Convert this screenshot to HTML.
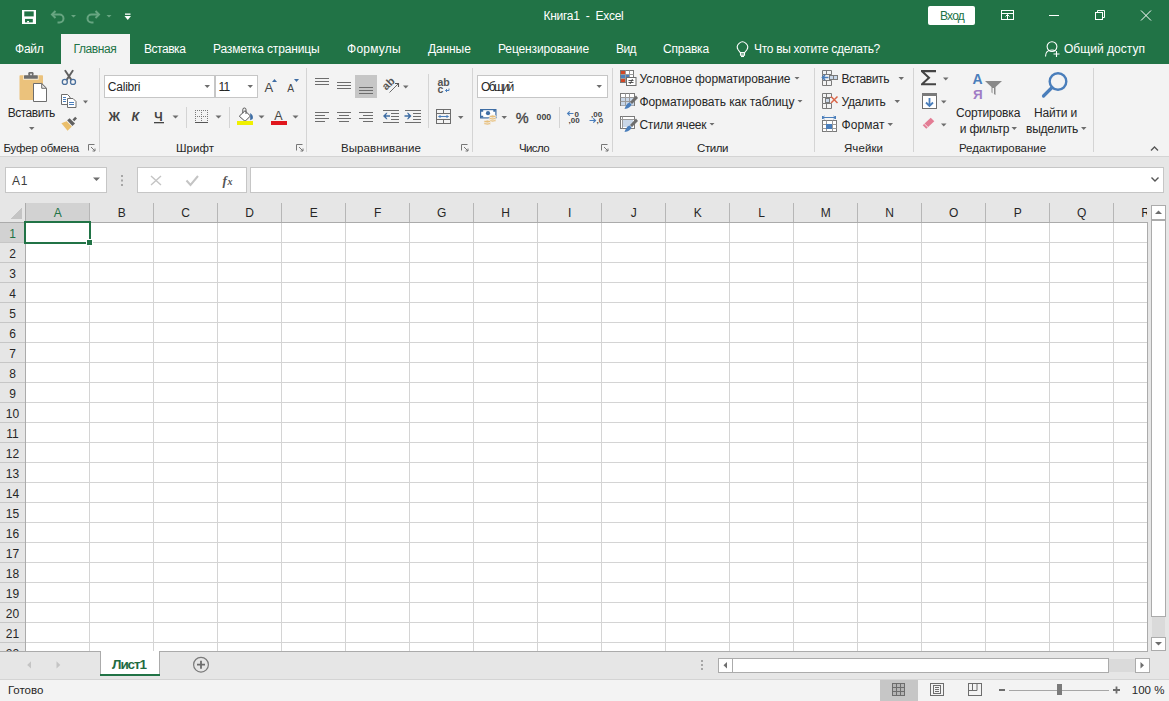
<!DOCTYPE html>
<html><head><meta charset="utf-8"><style>
html,body{margin:0;padding:0;width:1169px;height:701px;overflow:hidden;background:#fff}
#root{position:relative;width:1169px;height:701px;overflow:hidden;font-family:"Liberation Sans",sans-serif;background:#e6e6e6}
.a{position:absolute}
svg{position:absolute;overflow:visible}
</style></head><body><div id="root">
<div class="a" style="left:0px;top:0px;width:1169px;height:64px;background:#217346;"></div>
<div class="a" style="left:61px;top:34px;width:69px;height:30px;background:#f3f3f3;"></div>
<div class="a" style="left:0px;top:64px;width:1169px;height:92px;background:#f3f3f3;"></div>
<div class="a" style="left:0px;top:156px;width:1169px;height:1px;background:#d4d4d4;"></div>
<div class="a" style="left:5px;top:167px;width:102px;height:26px;background:#fff;box-sizing:border-box;border:1px solid #c6c6c6"></div>
<div class="a" style="left:137px;top:167px;width:110px;height:26px;background:#fff;box-sizing:border-box;border:1px solid #c6c6c6"></div>
<div class="a" style="left:250px;top:167px;width:914px;height:26px;background:#fff;box-sizing:border-box;border:1px solid #c6c6c6"></div>
<div class="a" style="left:25px;top:222px;width:1123px;height:429px;background:#fff;"></div>
<div class="a" style="left:25px;top:203px;width:1123px;height:19px;background:#e6e6e6;"></div>
<div class="a" style="left:25px;top:203px;width:64px;height:19px;background:#d2d2d2;"></div>
<div class="a" style="left:0px;top:222px;width:25px;height:429px;background:#e6e6e6;"></div>
<div class="a" style="left:0px;top:222px;width:25px;height:20px;background:#d2d2d2;"></div>
<svg class="a" style="left:0;top:0" width="1169" height="701" shape-rendering="crispEdges"><rect x="89" y="222" width="1" height="429" fill="#d4d4d4"/><rect x="89" y="203" width="1" height="19" fill="#b6b6b6"/><rect x="153" y="222" width="1" height="429" fill="#d4d4d4"/><rect x="153" y="203" width="1" height="19" fill="#b6b6b6"/><rect x="217" y="222" width="1" height="429" fill="#d4d4d4"/><rect x="217" y="203" width="1" height="19" fill="#b6b6b6"/><rect x="281" y="222" width="1" height="429" fill="#d4d4d4"/><rect x="281" y="203" width="1" height="19" fill="#b6b6b6"/><rect x="345" y="222" width="1" height="429" fill="#d4d4d4"/><rect x="345" y="203" width="1" height="19" fill="#b6b6b6"/><rect x="409" y="222" width="1" height="429" fill="#d4d4d4"/><rect x="409" y="203" width="1" height="19" fill="#b6b6b6"/><rect x="473" y="222" width="1" height="429" fill="#d4d4d4"/><rect x="473" y="203" width="1" height="19" fill="#b6b6b6"/><rect x="537" y="222" width="1" height="429" fill="#d4d4d4"/><rect x="537" y="203" width="1" height="19" fill="#b6b6b6"/><rect x="601" y="222" width="1" height="429" fill="#d4d4d4"/><rect x="601" y="203" width="1" height="19" fill="#b6b6b6"/><rect x="665" y="222" width="1" height="429" fill="#d4d4d4"/><rect x="665" y="203" width="1" height="19" fill="#b6b6b6"/><rect x="729" y="222" width="1" height="429" fill="#d4d4d4"/><rect x="729" y="203" width="1" height="19" fill="#b6b6b6"/><rect x="793" y="222" width="1" height="429" fill="#d4d4d4"/><rect x="793" y="203" width="1" height="19" fill="#b6b6b6"/><rect x="857" y="222" width="1" height="429" fill="#d4d4d4"/><rect x="857" y="203" width="1" height="19" fill="#b6b6b6"/><rect x="921" y="222" width="1" height="429" fill="#d4d4d4"/><rect x="921" y="203" width="1" height="19" fill="#b6b6b6"/><rect x="985" y="222" width="1" height="429" fill="#d4d4d4"/><rect x="985" y="203" width="1" height="19" fill="#b6b6b6"/><rect x="1049" y="222" width="1" height="429" fill="#d4d4d4"/><rect x="1049" y="203" width="1" height="19" fill="#b6b6b6"/><rect x="1113" y="222" width="1" height="429" fill="#d4d4d4"/><rect x="1113" y="203" width="1" height="19" fill="#b6b6b6"/><rect x="25" y="242" width="1123" height="1" fill="#d4d4d4"/><rect x="0" y="242" width="25" height="1" fill="#c6c6c6"/><rect x="25" y="262" width="1123" height="1" fill="#d4d4d4"/><rect x="0" y="262" width="25" height="1" fill="#c6c6c6"/><rect x="25" y="282" width="1123" height="1" fill="#d4d4d4"/><rect x="0" y="282" width="25" height="1" fill="#c6c6c6"/><rect x="25" y="302" width="1123" height="1" fill="#d4d4d4"/><rect x="0" y="302" width="25" height="1" fill="#c6c6c6"/><rect x="25" y="322" width="1123" height="1" fill="#d4d4d4"/><rect x="0" y="322" width="25" height="1" fill="#c6c6c6"/><rect x="25" y="342" width="1123" height="1" fill="#d4d4d4"/><rect x="0" y="342" width="25" height="1" fill="#c6c6c6"/><rect x="25" y="362" width="1123" height="1" fill="#d4d4d4"/><rect x="0" y="362" width="25" height="1" fill="#c6c6c6"/><rect x="25" y="382" width="1123" height="1" fill="#d4d4d4"/><rect x="0" y="382" width="25" height="1" fill="#c6c6c6"/><rect x="25" y="402" width="1123" height="1" fill="#d4d4d4"/><rect x="0" y="402" width="25" height="1" fill="#c6c6c6"/><rect x="25" y="422" width="1123" height="1" fill="#d4d4d4"/><rect x="0" y="422" width="25" height="1" fill="#c6c6c6"/><rect x="25" y="442" width="1123" height="1" fill="#d4d4d4"/><rect x="0" y="442" width="25" height="1" fill="#c6c6c6"/><rect x="25" y="462" width="1123" height="1" fill="#d4d4d4"/><rect x="0" y="462" width="25" height="1" fill="#c6c6c6"/><rect x="25" y="482" width="1123" height="1" fill="#d4d4d4"/><rect x="0" y="482" width="25" height="1" fill="#c6c6c6"/><rect x="25" y="502" width="1123" height="1" fill="#d4d4d4"/><rect x="0" y="502" width="25" height="1" fill="#c6c6c6"/><rect x="25" y="522" width="1123" height="1" fill="#d4d4d4"/><rect x="0" y="522" width="25" height="1" fill="#c6c6c6"/><rect x="25" y="542" width="1123" height="1" fill="#d4d4d4"/><rect x="0" y="542" width="25" height="1" fill="#c6c6c6"/><rect x="25" y="562" width="1123" height="1" fill="#d4d4d4"/><rect x="0" y="562" width="25" height="1" fill="#c6c6c6"/><rect x="25" y="582" width="1123" height="1" fill="#d4d4d4"/><rect x="0" y="582" width="25" height="1" fill="#c6c6c6"/><rect x="25" y="602" width="1123" height="1" fill="#d4d4d4"/><rect x="0" y="602" width="25" height="1" fill="#c6c6c6"/><rect x="25" y="622" width="1123" height="1" fill="#d4d4d4"/><rect x="0" y="622" width="25" height="1" fill="#c6c6c6"/><rect x="25" y="642" width="1123" height="1" fill="#d4d4d4"/><rect x="0" y="642" width="25" height="1" fill="#c6c6c6"/><rect x="0" y="222" width="1148" height="1" fill="#ababab"/><rect x="25" y="203" width="1" height="448" fill="#ababab"/><rect x="1147" y="222" width="1" height="429" fill="#ababab"/><rect x="0" y="651" width="1148" height="1" fill="#ababab"/><polygon points="22,207 22,219 10,219" fill="#c4c4c4"/></svg>
<div class="a" style="left:24px;top:221px;width:67px;height:23px;background:transparent;box-sizing:border-box;border:2px solid #217346"></div>
<div class="a" style="left:87px;top:240px;width:5px;height:5px;background:#217346;box-shadow:0 0 0 1px #fff"></div>
<div class="a" style="left:0px;top:652px;width:1148px;height:27px;background:#e6e6e6;"></div>
<div class="a" style="left:0px;top:679px;width:1169px;height:1px;background:#d4d4d4;"></div>
<div class="a" style="left:0px;top:680px;width:1169px;height:21px;background:#f3f3f3;"></div>
<div class="a" style="left:100px;top:651px;width:60px;height:25px;background:#fff;"></div>
<div class="a" style="left:100px;top:674px;width:60px;height:2px;background:#217346;"></div>
<div class="a" style="left:1151px;top:205px;width:15px;height:15px;background:#fff;box-sizing:border-box;border:1px solid #ababab"></div>
<div class="a" style="left:1151px;top:220px;width:15px;height:397px;background:#fff;box-sizing:border-box;border:1px solid #ababab"></div>
<div class="a" style="left:1152px;top:617px;width:13px;height:21px;background:#dadada;"></div>
<div class="a" style="left:1151px;top:637px;width:15px;height:14px;background:#fff;box-sizing:border-box;border:1px solid #ababab"></div>
<div class="a" style="left:718px;top:658px;width:15px;height:15px;background:#fff;box-sizing:border-box;border:1px solid #ababab"></div>
<div class="a" style="left:732px;top:658px;width:377px;height:15px;background:#fff;box-sizing:border-box;border:1px solid #ababab"></div>
<div class="a" style="left:1109px;top:659px;width:26px;height:13px;background:#dadada;"></div>
<div class="a" style="left:1135px;top:658px;width:15px;height:15px;background:#fff;box-sizing:border-box;border:1px solid #ababab"></div>
<div class="a" style="left:880px;top:680px;width:38px;height:21px;background:#c6c6c6;"></div>
<!-- QAT -->
<svg style="left:0;top:0" width="140" height="32">
 <rect x="22" y="10" width="14" height="14" fill="#fff"/>
 <rect x="24.3" y="11.4" width="9.4" height="5" fill="#217346"/>
 <rect x="25" y="18.9" width="7.8" height="3.5" fill="#217346"/>
 <rect x="27.1" y="21" width="1.9" height="1.4" fill="#fff"/>
 <g fill="none" stroke="#67a581" stroke-width="2">
  <path d="M52 14.5h7.5a4 4 0 0 1 0 8h-2"/>
  <path d="M55.5 11l-3.5 3.5 3.5 3.5"/>
  <path d="M99 14.5h-7.5a4 4 0 0 0 0 8h2"/>
  <path d="M95.5 11l3.5 3.5 -3.5 3.5"/>
 </g>
 <path d="M71 15h5l-2.5 2.5z M106.5 15h5l-2.5 2.5z" fill="#67a581"/>
 <rect x="125" y="13.5" width="5.5" height="1.3" fill="#fff"/>
 <path d="M124.5 16h6.5l-3.25 4z" fill="#fff"/>
</svg>
<!-- window controls -->
<svg style="left:0;top:0" width="1169" height="32">
 <rect x="928" y="6" width="47" height="19" rx="2" fill="#fff"/>
 <g fill="none" stroke="#fff" stroke-width="1">
  <rect x="1001.5" y="10.5" width="12" height="9"/>
  <path d="M1001.5 13.5h12"/>
  <path d="M1007.5 19.5v-5M1005.5 16.5l2-2 2 2"/>
  <path d="M1049 15.5h10"/>
  <rect x="1095.5" y="12.5" width="7" height="7"/>
  <path d="M1097.5 12.5v-2h7v7h-2"/>
  <path d="M1141 10.5l10 10M1151 10.5l-10 10"/>
 </g>
</svg>
<!-- tell me / share -->
<svg style="left:0;top:32" width="1169" height="32">
 <g fill="none" stroke="#fff" stroke-width="1.1">
  <path d="M740.5 20.8L738.3 18A5.1 5.1 0 1 1 746.7 18L744.5 20.8Z"/>
  <path d="M740.5 20.8h4v2.3h-4z"/>
  <path d="M741 24.5h3"/>
  <circle cx="1052" cy="14.6" r="4.9"/>
  <path d="M1045.5 24.5c0-4 2.5-6.5 6.5-6.5 1.5 0 2.5.3 3.5 1"/>
  <path d="M1056.5 19v6M1053.5 22h6"/>
 </g>
</svg>
<!-- clipboard group -->
<svg style="left:0;top:0" width="110" height="160">
 <rect x="19.5" y="75.2" width="23.5" height="24.8" rx=".8" fill="#ebc27c"/>
 <path d="M23.2 75.2h15.4v4.5h-15.4z" fill="#f6ecd9"/>
 <rect x="24" y="75.2" width="13.8" height="3.6" rx=".6" fill="#6d6d6d"/>
 <rect x="28.3" y="72.1" width="5.2" height="4" rx="1.2" fill="#6d6d6d"/>
 <rect x="30.2" y="73.6" width="1.6" height="1.6" fill="#f3f3f3"/>
 <path d="M33.5 83.5h8.2l4.8 4.8v13.2h-13z" fill="#fff" stroke="#6d6d6d" stroke-width="1"/>
 <path d="M41.7 83.5v4.8h4.8z" fill="#e6e6e6" stroke="#6d6d6d" stroke-width="1" stroke-linejoin="round"/>
 <path d="M29 127h5.5l-2.75 3z" fill="#6d6d6d"/>
 <!-- scissors -->
 <path d="M65.3 70.8L71.2 79.6M72.7 70.8L66.8 79.6" stroke="#5f5f5f" stroke-width="1.9" fill="none" stroke-linecap="round"/>
 <circle cx="64.8" cy="81.9" r="2.5" fill="#f3f3f3" stroke="#4a6f9c" stroke-width="1.3"/>
 <circle cx="73" cy="81.9" r="2.5" fill="#f3f3f3" stroke="#4a6f9c" stroke-width="1.3"/>
 <!-- copy -->
 <path d="M61.5 94.5h6l2.5 2.5v7.5h-8.5z" fill="#fff" stroke="#6d6d6d" stroke-width="1"/>
 <path d="M67.5 98.5h5.5l3 3v6h-8.5z" fill="#fff" stroke="#6d6d6d" stroke-width="1"/>
 <path d="M63 97.5h3M63 99.5h3M63 101.5h3M69 102.5h5M69 104.5h5" stroke="#4a7ebb" stroke-width="1"/>
 <path d="M83 100.5h5l-2.5 3z" fill="#6d6d6d"/>
 <!-- format painter -->
 <path d="M72.5 119.5L75.2 116.8 77 118.6 74.3 121.3z" fill="#606060"/>
 <path d="M67.1 120.2L69.6 118.3 75 123.6 72.4 125.9z" fill="#606060"/>
 <path d="M61.4 123.3L66.6 121.3 71.8 126.6 67.6 130.8z" fill="#ebbf6b"/>
 <!-- launcher -->
 <g fill="none" stroke="#777" stroke-width="1"><path d="M88.5 150.5v-6h6"/><path d="M91 147l4 4M95 148.5v2.5h-2.5"/></g>
 <rect x="99" y="68" width="1" height="84" fill="#d4d4d4"/>
</svg>
<!-- font group -->
<svg style="left:0;top:0" width="320" height="160">
 <rect x="104.5" y="75.5" width="110" height="22" fill="#fff" stroke="#c6c6c6"/>
 <rect x="215.5" y="75.5" width="42" height="22" fill="#fff" stroke="#c6c6c6"/>
 <g fill="#6d6d6d">
  <path d="M204.5 85h5.5l-2.75 3z"/>
  <path d="M247.5 85h5.5l-2.75 3z"/>
  <path d="M172.5 115.5h6l-3 3z"/>
  <path d="M215.5 115.5h6l-3 3z"/>
  <path d="M258.5 115.5h6l-3 3z"/>
  <path d="M292.5 115.5h6l-3 3z"/>
 </g>
 <g fill="#3e6da4"><path d="M272 82h5l-2.5-3z"/><path d="M294 79h5l-2.5 3z"/></g>
  <text x="264.5" y="92" font-size="13" fill="#444" font-family="Liberation Sans">A</text>
 <text x="287.3" y="92" font-size="10.3" fill="#444" font-family="Liberation Sans">A</text>
 <text x="108.5" y="121" font-size="12.8" font-weight="700" fill="#444" font-family="Liberation Sans">Ж</text>
 <text x="131.5" y="121" font-size="12.5" font-weight="700" font-style="italic" fill="#444" font-family="Liberation Sans">К</text>
 <text x="154.3" y="121" font-size="12" font-weight="700" fill="#444" font-family="Liberation Sans">Ч</text>
 <rect x="154" y="122" width="10" height="1.3" fill="#444"/>
 <rect x="186" y="107" width="1" height="21" fill="#d4d4d4"/>
 <rect x="229" y="107" width="1" height="21" fill="#d4d4d4"/>
 <!-- borders -->
 <g fill="#8a8a8a">
  <path d="M195 110h13v1h-13zM195 116h13v1h-13z" style="opacity:.0"/>
 </g>
 <path d="M195.5 110v12M201.5 110v12M207.5 110v12M195 110.5h13M195 116.5h13" stroke="#7a7a7a" stroke-width="1" stroke-dasharray="1 1" fill="none"/>
 <rect x="195" y="122" width="13" height="1" fill="#555"/>
 <!-- fill color -->
 <path d="M239.3 116.2L245 110.7 250.4 116 245 121.3z" fill="#fff" stroke="#555" stroke-width="1"/>
 <path d="M242.8 113.2V109.6a1.6 1.6 0 0 1 3.2 0V114" fill="none" stroke="#555" stroke-width="1"/>
 <path d="M250.2 113c2.2 1.4 3.2 3.6 2.6 5.4-.5 1-1.6 1.4-2.6 1.8z" fill="#3e6da4"/>
 <rect x="237" y="121" width="16" height="4" fill="#f0f000"/>
 <!-- font color -->
 <text x="274.3" y="120" font-size="12.5" fill="#444" font-family="Liberation Sans">A</text>
 <rect x="271" y="121" width="16" height="4" fill="#e0161d"/>
 <g fill="none" stroke="#777" stroke-width="1"><path d="M296.5 150.5v-6h6"/><path d="M299 147l4 4M303 148.5v2.5h-2.5"/></g>
 <rect x="306" y="68" width="1" height="84" fill="#d4d4d4"/>
</svg>
<!-- alignment group -->
<svg style="left:0;top:0" width="480" height="160">
 <rect x="355" y="75" width="22" height="23" fill="#c6c6c6"/>
 <g stroke="#6d6d6d" stroke-width="1" fill="none">
  <path d="M315 78.5h14M315 81.5h14M315 84.5h14"/>
  <path d="M337 82.5h14M337 85.5h14M337 88.5h14"/>
  <path d="M359 87.5h14M359 90.5h14M359 93.5h14"/>
  <path d="M315 112.5h14M315 115.5h10M315 118.5h14M315 121.5h10"/>
  <path d="M337 112.5h14M339 115.5h10M337 118.5h14M339 121.5h10"/>
  <path d="M359 112.5h14M363 115.5h10M359 118.5h14M363 121.5h10"/>
  <path d="M383 110.5h16M391 113.5h8M391 116.5h8M391 119.5h8M383 122.5h16"/>
  <path d="M405 110.5h16M413 113.5h8M413 116.5h8M413 119.5h8M405 122.5h16"/>
  <path d="M389.5 92.5l9-9"/>
 </g>
 <path d="M383 116l3.3-3.3h1.2l-1.6 2.5h4.1v1.6h-4.1l1.6 2.5h-1.2z" fill="#3e6da4"/>
 <path d="M411.5 116l-3.3-3.3h-1.2l1.6 2.5h-4.1v1.6h4.1l-1.6 2.5h1.2z" fill="#3e6da4"/>
 <path d="M395 83.5h3.5v3.5" stroke="#555" stroke-width="1.1" fill="none"/>
 <text x="0" y="0" font-size="11" font-weight="700" fill="#555" font-family="Liberation Sans" transform="translate(386.3 90.8) rotate(-45)">ab</text>
 <path d="M403 85.5h5.5l-2.75 3z" fill="#6d6d6d"/>
 <rect x="428" y="74" width="1" height="54" fill="#d4d4d4"/>
 <!-- wrap -->
 <text x="437.5" y="86.3" font-size="10.5" font-weight="700" fill="#555" font-family="Liberation Sans">ab</text>
 <text x="437.5" y="93.3" font-size="10.5" font-weight="700" fill="#555" font-family="Liberation Sans">c</text>
 <path d="M449 88.5v2h-3.5M447 89l-1.5 1.5 1.5 1.5" stroke="#4a7ebb" stroke-width="1" fill="none"/>
 <!-- merge -->
 <g stroke="#6d6d6d" stroke-width="1" fill="none">
  <rect x="436.5" y="109.5" width="14" height="14"/>
  <path d="M436.5 113.5h14M436.5 119.5h14M443.5 109.5v4M443.5 119.5v4"/>
 </g>
 <path d="M438.5 116.5h10M440.5 115l-1.5 1.5 1.5 1.5M446.5 115l1.5 1.5-1.5 1.5" stroke="#4a7ebb" stroke-width="1" fill="none"/>
 <path d="M458 116h5.5l-2.75 3z" fill="#6d6d6d"/>
 <g fill="none" stroke="#777" stroke-width="1"><path d="M461.5 150.5v-6h6"/><path d="M464 147l4 4M468 148.5v2.5h-2.5"/></g>
 <rect x="472" y="68" width="1" height="84" fill="#d4d4d4"/>
</svg>
<!-- number group -->
<svg style="left:0;top:0" width="620" height="160">
 <rect x="477.5" y="75.5" width="130" height="22" fill="#fff" stroke="#c6c6c6"/>
 <path d="M596.5 85h5.5l-2.75 3z" fill="#6d6d6d"/>
 <rect x="480.6" y="109.6" width="15.3" height="8.3" fill="#fff" stroke="#3e6da4" stroke-width="1.2"/>
 <path d="M481 110h2.2v1.8h-2.2zM493.3 110h2.2v1.8h-2.2zM481 115.8h2.2v1.8h-2.2z" fill="#3e6da4"/>
 <circle cx="488" cy="113.2" r="2.1" fill="#3e6da4"/>
 <g fill="#e8bf7a" stroke="#f3f3f3" stroke-width=".9">
  <ellipse cx="492.6" cy="120.6" rx="3.4" ry="1.5"/>
  <ellipse cx="492.6" cy="118.5" rx="3.4" ry="1.5"/>
  <ellipse cx="492.6" cy="116.4" rx="3.4" ry="1.5"/>
  <ellipse cx="487.3" cy="123.6" rx="3.4" ry="1.5"/>
  <ellipse cx="487.3" cy="121.5" rx="3.4" ry="1.5"/>
 </g>
 <path d="M501.5 116h5.5l-2.75 3z" fill="#6d6d6d"/>
 <text x="515.8" y="122.8" font-size="14.5" fill="#444" font-family="Liberation Sans" stroke="#444" stroke-width=".35">%</text>
 <text x="536.6" y="120" font-size="8.8" font-weight="700" fill="#444" font-family="Liberation Sans" letter-spacing="-.1">000</text>
 <rect x="559" y="107" width="1" height="21" fill="#d4d4d4"/>
 <text x="574.5" y="116.6" font-size="8" font-weight="700" fill="#444" font-family="Liberation Sans">0</text>
 <text x="568.5" y="123" font-size="8" font-weight="700" fill="#444" font-family="Liberation Sans">,00</text>
 <path d="M567.5 113.5h6M569.8 111.3l-2.2 2.2 2.2 2.2" stroke="#4a7ebb" stroke-width="1.2" fill="none"/>
 <text x="591" y="116.6" font-size="8" font-weight="700" fill="#444" font-family="Liberation Sans">,00</text>
 <text x="596.5" y="123" font-size="8" font-weight="700" fill="#444" font-family="Liberation Sans">,0</text>
 <path d="M589.5 120.5h6M593.3 118.3l2.2 2.2-2.2 2.2" stroke="#4a7ebb" stroke-width="1.2" fill="none"/>
 <g fill="none" stroke="#777" stroke-width="1"><path d="M601.5 150.5v-6h6"/><path d="M604 147l4 4M608 148.5v2.5h-2.5"/></g>
 <rect x="612" y="68" width="1" height="84" fill="#d4d4d4"/>
</svg>
<!-- styles group -->
<svg style="left:0;top:0" width="820" height="160">
 <g>
  <rect x="620.5" y="70.5" width="13" height="12" fill="#fff" stroke="#7a7a7a"/>
  <rect x="621" y="71" width="4.5" height="3.5" fill="#d24726"/>
  <rect x="621" y="75" width="8" height="3" fill="#4a7ebb"/>
  <rect x="621" y="78.5" width="4.5" height="3.5" fill="#d24726"/>
  <path d="M620.5 74.5h13M620.5 78.5h13M625.5 70.5v12M629.5 70.5v12" stroke="#9a9a9a" fill="none"/>
  <rect x="626.5" y="77.5" width="9.5" height="8" fill="#fff" stroke="#6d6d6d"/>
  <path d="M628.5 80.5h5M628.5 82.5h5M632.5 79l-2.5 5" stroke="#444" stroke-width=".9" fill="none"/>
 </g>
 <g>
  <rect x="620.5" y="93.5" width="14" height="12" fill="#fff" stroke="#7a7a7a"/>
  <rect x="621" y="97.5" width="13" height="8" fill="#c9d7e8"/>
  <path d="M620.5 97.5h14M620.5 101.5h14M625.5 93.5v12M629.5 93.5v12" stroke="#9a9a9a" fill="none"/>
  <path d="M636 95.5l-6 6.5 2 2 6-6z" fill="#6d6d6d"/>
  <path d="M629.5 102.5l2 2c-1 2.5-3 4-7 4.5 1-2.5 2-5.5 5-6.5z" fill="#4a7ebb"/>
 </g>
 <g>
  <rect x="620.5" y="116.5" width="14" height="12" fill="#fff" stroke="#7a7a7a"/>
  <rect x="623" y="119" width="10" height="8" fill="#c9d7e8"/>
  <path d="M620.5 119.5h14M622.5 116.5v12" stroke="#9a9a9a" fill="none"/>
  <path d="M636 118.5l-6 6.5 2 2 6-6z" fill="#6d6d6d"/>
  <path d="M629.5 125.5l2 2c-1 2.5-3 4-7 4.5 1-2.5 2-5.5 5-6.5z" fill="#4a7ebb"/>
 </g>
 <path d="M794.5 77h5l-2.5 2.5zM797.5 100h5l-2.5 2.5zM709.5 123h5l-2.5 2.5z" fill="#6d6d6d"/>
 <rect x="814" y="68" width="1" height="84" fill="#d4d4d4"/>
</svg>
<!-- cells group -->
<svg style="left:0;top:0" width="1169" height="160">
 <g stroke="#7a7a7a" stroke-width="1" fill="none">
  <path d="M822.5 70.5h9v4h-9zM826.5 70.5v4"/>
  <path d="M822.5 80.5h9v5h-9zM826.5 80.5v5"/>
  <path d="M822.5 74.5v6M831.5 74.5v2"/>
 </g>
 <rect x="829.5" y="75.5" width="8" height="4" fill="#c9d7e8" stroke="#7a7a7a"/>
 <path d="M833.5 75.5v4" stroke="#7a7a7a"/>
 <path d="M822.5 77.5h6M825 75l-2.5 2.5 2.5 2.5" stroke="#4a7ebb" stroke-width="1.6" fill="none"/>
 <g stroke="#7a7a7a" stroke-width="1" fill="none">
  <path d="M822.5 93.5h9v4h-9zM826.5 93.5v4"/>
  <path d="M822.5 103.5h9v5h-9zM826.5 103.5v5"/>
  <path d="M822.5 97.5v6"/>
 </g>
 <rect x="825.5" y="98.5" width="4" height="4" fill="#c9d7e8" stroke="#7a7a7a"/>
 <path d="M831 96.5l6.5 6.5M837.5 96.5l-6.5 6.5" stroke="#d9674a" stroke-width="1.5"/>
 <g>
  <path d="M822.5 117.5h13M822.5 116v3M835.5 116v3M824.5 116l-2 1.5 2 1.5M833.5 116l2 1.5-2 1.5" stroke="#4a7ebb" stroke-width="1" fill="none"/>
  <rect x="822.5" y="120.5" width="14" height="11" fill="#fff" stroke="#7a7a7a"/>
  <path d="M822.5 124.5h14M822.5 128.5h14M826.5 120.5v11M832.5 120.5v11" stroke="#9a9a9a" fill="none"/>
  <rect x="826" y="124" width="6" height="5" fill="#4a7ebb"/>
 </g>
 <path d="M898.5 77h5.5l-2.75 3zM894.5 100h5.5l-2.75 3zM887.5 123h5.5l-2.75 3z" fill="#6d6d6d"/>
 <rect x="913" y="68" width="1" height="84" fill="#d4d4d4"/>
 <!-- editing -->
 <path d="M921 70h15v2.2h-11.5l6 5.5-6 5.5h11.5v2h-15v-1.5l6.5-6-6.5-6z" fill="#444"/>
 <path d="M943 77.5h5.5l-2.75 3z" fill="#6d6d6d"/>
 <rect x="922.5" y="93.5" width="14" height="15" fill="#fff" stroke="#6d6d6d"/>
 <rect x="922" y="93" width="15" height="3" fill="#7a7a7a"/>
 <path d="M929.5 98v8M926 102.5l3.5 3.5 3.5-3.5" stroke="#4a7ebb" stroke-width="1.8" fill="none"/>
 <path d="M941 100.5h5.5l-2.75 3z" fill="#6d6d6d"/>
 <path d="M922.7 125.2L930.7 117.7 934.3 121.3 926.3 128.8z" fill="#e37c94"/>
 <path d="M924.2 123.6L928 127.3" stroke="#f3f3f3" stroke-width=".9"/>
 <path d="M941 123.5h5.5l-2.75 3z" fill="#6d6d6d"/>
 <!-- sort -->
 <text x="972.5" y="84" font-size="14" font-weight="700" fill="#4a7ebb" font-family="Liberation Sans">A</text>
 <text x="973" y="99" font-size="13.5" font-weight="700" fill="#a07cc5" font-family="Liberation Sans">Я</text>
 <path d="M985 81h17l-6.5 6v8l-4 -2.5v-5.5z" fill="#8a8a8a"/>
 <path d="M992.5 88v5.5l1.5.8v-6.3z" fill="#f3f3f3"/>
 <path d="M1011.5 127h5.5l-2.75 3zM1081 127h5.5l-2.75 3z" fill="#6d6d6d"/>
 <!-- find -->
 <circle cx="1058" cy="81.5" r="8.3" fill="none" stroke="#4a7ebb" stroke-width="2.4"/>
 <path d="M1052 87.5l-8.5 8.5" stroke="#4a7ebb" stroke-width="3.2" stroke-linecap="round"/>
 <rect x="1093" y="68" width="1" height="84" fill="#d4d4d4"/>
 <path d="M1151 150.5l3.5-3.5 3.5 3.5" stroke="#555" stroke-width="1.3" fill="none"/>
</svg>
<!-- formula bar icons -->
<svg style="left:0;top:160" width="1169" height="45">
 <path d="M93 17.5h7l-3.5 3.5z" fill="#6d6d6d"/>
 <rect x="121" y="15" width="2" height="2" fill="#a6a6a6"/>
 <rect x="121" y="19.5" width="2" height="2" fill="#a6a6a6"/>
 <rect x="121" y="24" width="2" height="2" fill="#a6a6a6"/>
 <path d="M151 16l10 9M161 16l-10 9" stroke="#c4c4c4" stroke-width="1.4"/>
 <path d="M186.5 20.5l4 4.5 7.5-9" stroke="#c4c4c4" stroke-width="2" fill="none"/>
 <text x="222.5" y="24.5" font-size="13" font-style="italic" font-weight="700" fill="#555" font-family="Liberation Serif">f</text>
 <text x="227.5" y="24.5" font-size="10" font-style="italic" font-weight="700" fill="#555" font-family="Liberation Serif">x</text>
 <path d="M1151.5 17.5l3.5 3.5 3.5-3.5" stroke="#555" stroke-width="1.4" fill="none"/>
</svg>
<!-- sheet bar + status icons -->
<svg style="left:0;top:640" width="1169" height="61">
 <rect x="100" y="11" width="1" height="23" fill="#ababab"/>
 <rect x="159" y="11" width="1" height="23" fill="#ababab"/>
 <path d="M31 21.3v7.2l-3.8-3.6z" fill="#c4c4c4"/>
 <path d="M56.5 21.3v7.2l3.8-3.6z" fill="#c4c4c4"/>
 <circle cx="201" cy="24.7" r="7.4" fill="none" stroke="#7a7a7a" stroke-width="1.2"/>
 <path d="M197 24.7h8M201 20.7v8" stroke="#6d6d6d" stroke-width="1.8"/>
 <rect x="701" y="20" width="2" height="2" fill="#a6a6a6"/>
 <rect x="701" y="24" width="2" height="2" fill="#a6a6a6"/>
 <rect x="701" y="28" width="2" height="2" fill="#a6a6a6"/>
 <path d="M727 22v6.5l-3.5-3.25z" fill="#6d6d6d"/>
 <path d="M1140.5 22v6.5l3.5-3.25z" fill="#6d6d6d"/>
 <!-- normal view -->
 <rect x="892.5" y="43.5" width="12" height="12" fill="#b4b4b4" stroke="#6d6d6d"/>
 <path d="M896.5 43.5v12M900.5 43.5v12M892.5 47.5h12M892.5 51.5h12" stroke="#6d6d6d" fill="none"/>
 <g fill="none" stroke="#6d6d6d" stroke-width="1">
  <rect x="930.5" y="43.5" width="13" height="12"/>
  <rect x="933.5" y="45.5" width="7" height="8"/>
  <path d="M935 47.5h4M935 49.5h4M935 51.5h4"/>
  <rect x="968.5" y="43.5" width="13" height="12"/>
  <path d="M968.5 50.5h8.5v-7M972.5 43.5v7"/>
 </g>
 <rect x="999" y="49" width="6" height="2" fill="#6d6d6d"/>
 <rect x="1009" y="50" width="100" height="1" fill="#a6a6a6"/>
 <rect x="1057" y="44" width="5" height="11" fill="#7a7a7a"/>
 <path d="M1113 50h7M1116.5 46.5v7" stroke="#6d6d6d" stroke-width="1.8"/>
</svg>
<svg style="left:1100;top:200" width="69" height="460">
 <path d="M55 14h7l-3.5-3.5z" fill="#6d6d6d"/>
 <path d="M55 442h7l-3.5 3.5z" fill="#6d6d6d"/>
</svg>
<span id="t0" style="position:absolute;left:543.5px;top:9.84px;font-size:12px;line-height:12px;color:#ffffff;font-weight:400;white-space:pre;letter-spacing:-0.279px;">Книга1  -  Excel</span><span id="t1" style="position:absolute;left:940px;top:9.84px;font-size:12px;line-height:12px;color:#217346;font-weight:400;white-space:pre;letter-spacing:-0.789px;">Вход</span><span id="t2" style="position:absolute;left:15px;top:42.84px;font-size:12px;line-height:12px;color:#ffffff;font-weight:400;white-space:pre;letter-spacing:-0.229px;">Файл</span><span id="t3" style="position:absolute;left:73.6px;top:42.84px;font-size:12px;line-height:12px;color:#217346;font-weight:400;white-space:pre;letter-spacing:-0.427px;">Главная</span><span id="t4" style="position:absolute;left:144px;top:42.84px;font-size:12px;line-height:12px;color:#ffffff;font-weight:400;white-space:pre;letter-spacing:-0.458px;">Вставка</span><span id="t5" style="position:absolute;left:213px;top:42.84px;font-size:12px;line-height:12px;color:#ffffff;font-weight:400;white-space:pre;letter-spacing:-0.140px;">Разметка страницы</span><span id="t6" style="position:absolute;left:347px;top:42.84px;font-size:12px;line-height:12px;color:#ffffff;font-weight:400;white-space:pre;letter-spacing:0.254px;">Формулы</span><span id="t7" style="position:absolute;left:428px;top:42.84px;font-size:12px;line-height:12px;color:#ffffff;font-weight:400;white-space:pre;letter-spacing:-0.110px;">Данные</span><span id="t8" style="position:absolute;left:498px;top:42.84px;font-size:12px;line-height:12px;color:#ffffff;font-weight:400;white-space:pre;letter-spacing:-0.119px;">Рецензирование</span><span id="t9" style="position:absolute;left:616px;top:42.84px;font-size:12px;line-height:12px;color:#ffffff;font-weight:400;white-space:pre;letter-spacing:-0.573px;">Вид</span><span id="t10" style="position:absolute;left:663px;top:42.84px;font-size:12px;line-height:12px;color:#ffffff;font-weight:400;white-space:pre;letter-spacing:-0.154px;">Справка</span><span id="t11" style="position:absolute;left:754px;top:42.84px;font-size:12px;line-height:12px;color:#ffffff;font-weight:400;white-space:pre;letter-spacing:-0.303px;">Что вы хотите сделать?</span><span id="t12" style="position:absolute;left:1064px;top:42.84px;font-size:12px;line-height:12px;color:#ffffff;font-weight:400;white-space:pre;letter-spacing:0.031px;">Общий доступ</span><span id="t13" style="position:absolute;left:7.7px;top:106.84px;font-size:12px;line-height:12px;color:#262626;font-weight:400;white-space:pre;letter-spacing:-0.484px;">Вставить</span><span id="t14" style="position:absolute;left:3.5px;top:143.27px;font-size:11.5px;line-height:11.5px;color:#262626;font-weight:400;white-space:pre;letter-spacing:-0.221px;">Буфер обмена</span><span id="t15" style="position:absolute;left:107.8px;top:80.84px;font-size:12px;line-height:12px;color:#262626;font-weight:400;white-space:pre;letter-spacing:-0.217px;">Calibri</span><span id="t16" style="position:absolute;left:218.6px;top:80.84px;font-size:12px;line-height:12px;color:#262626;font-weight:400;white-space:pre;letter-spacing:-0.884px;">11</span><span id="t17" style="position:absolute;left:176px;top:143.27px;font-size:11.5px;line-height:11.5px;color:#262626;font-weight:400;white-space:pre;letter-spacing:0.031px;">Шрифт</span><span id="t18" style="position:absolute;left:341px;top:143.27px;font-size:11.5px;line-height:11.5px;color:#262626;font-weight:400;white-space:pre;letter-spacing:0.069px;">Выравнивание</span><span id="t19" style="position:absolute;left:481px;top:80.84px;font-size:12px;line-height:12px;color:#262626;font-weight:400;white-space:pre;letter-spacing:-1.600px;">Общий</span><span id="t20" style="position:absolute;left:519px;top:143.27px;font-size:11.5px;line-height:11.5px;color:#262626;font-weight:400;white-space:pre;letter-spacing:-0.616px;">Число</span><span id="t21" style="position:absolute;left:639.4px;top:72.84px;font-size:12px;line-height:12px;color:#262626;font-weight:400;white-space:pre;letter-spacing:-0.073px;">Условное форматирование</span><span id="t22" style="position:absolute;left:639.4px;top:95.84px;font-size:12px;line-height:12px;color:#262626;font-weight:400;white-space:pre;letter-spacing:-0.046px;">Форматировать как таблицу</span><span id="t23" style="position:absolute;left:639.4px;top:118.84px;font-size:12px;line-height:12px;color:#262626;font-weight:400;white-space:pre;letter-spacing:-0.206px;">Стили ячеек</span><span id="t24" style="position:absolute;left:697px;top:143.27px;font-size:11.5px;line-height:11.5px;color:#262626;font-weight:400;white-space:pre;letter-spacing:-0.428px;">Стили</span><span id="t25" style="position:absolute;left:841.5px;top:72.84px;font-size:12px;line-height:12px;color:#262626;font-weight:400;white-space:pre;letter-spacing:-0.422px;">Вставить</span><span id="t26" style="position:absolute;left:841.5px;top:95.84px;font-size:12px;line-height:12px;color:#262626;font-weight:400;white-space:pre;letter-spacing:-0.261px;">Удалить</span><span id="t27" style="position:absolute;left:841.5px;top:118.84px;font-size:12px;line-height:12px;color:#262626;font-weight:400;white-space:pre;letter-spacing:0.060px;">Формат</span><span id="t28" style="position:absolute;left:844px;top:143.27px;font-size:11.5px;line-height:11.5px;color:#262626;font-weight:400;white-space:pre;letter-spacing:0.070px;">Ячейки</span><span id="t29" style="position:absolute;left:955.9px;top:106.84px;font-size:12px;line-height:12px;color:#262626;font-weight:400;white-space:pre;letter-spacing:-0.156px;">Сортировка</span><span id="t30" style="position:absolute;left:959.8px;top:122.84px;font-size:12px;line-height:12px;color:#262626;font-weight:400;white-space:pre;letter-spacing:-0.201px;">и фильтр</span><span id="t31" style="position:absolute;left:1034px;top:106.84px;font-size:12px;line-height:12px;color:#262626;font-weight:400;white-space:pre;letter-spacing:-0.183px;">Найти и</span><span id="t32" style="position:absolute;left:1026px;top:122.84px;font-size:12px;line-height:12px;color:#262626;font-weight:400;white-space:pre;letter-spacing:-0.217px;">выделить</span><span id="t33" style="position:absolute;left:959px;top:143.27px;font-size:11.5px;line-height:11.5px;color:#262626;font-weight:400;white-space:pre;letter-spacing:-0.044px;">Редактирование</span><span id="t34" style="position:absolute;left:12px;top:174.84px;font-size:12px;line-height:12px;color:#3c3c3c;font-weight:400;white-space:pre;letter-spacing:0.656px;">A1</span><span id="t35" style="position:absolute;left:7.9px;top:685.27px;font-size:11.5px;line-height:11.5px;color:#262626;font-weight:400;white-space:pre;letter-spacing:-0.003px;">Готово</span><span id="t36" style="position:absolute;left:1131.8px;top:685.27px;font-size:11.5px;line-height:11.5px;color:#262626;font-weight:400;white-space:pre;letter-spacing:0.000px;">100 %</span><span id="t37" style="position:absolute;left:112px;top:657.57px;font-size:13.5px;line-height:13.5px;color:#1f6b42;font-weight:700;white-space:pre;letter-spacing:-1.081px;">Лист1</span><span style="position:absolute;left:17.700000000000003px;width:80px;text-align:center;top:206.84px;font-size:12px;line-height:12px;color:#217346;font-weight:400;white-space:pre;">A</span><span style="position:absolute;left:81.7px;width:80px;text-align:center;top:206.84px;font-size:12px;line-height:12px;color:#262626;font-weight:400;white-space:pre;">B</span><span style="position:absolute;left:145.7px;width:80px;text-align:center;top:206.84px;font-size:12px;line-height:12px;color:#262626;font-weight:400;white-space:pre;">C</span><span style="position:absolute;left:209.7px;width:80px;text-align:center;top:206.84px;font-size:12px;line-height:12px;color:#262626;font-weight:400;white-space:pre;">D</span><span style="position:absolute;left:273.7px;width:80px;text-align:center;top:206.84px;font-size:12px;line-height:12px;color:#262626;font-weight:400;white-space:pre;">E</span><span style="position:absolute;left:337.7px;width:80px;text-align:center;top:206.84px;font-size:12px;line-height:12px;color:#262626;font-weight:400;white-space:pre;">F</span><span style="position:absolute;left:401.7px;width:80px;text-align:center;top:206.84px;font-size:12px;line-height:12px;color:#262626;font-weight:400;white-space:pre;">G</span><span style="position:absolute;left:465.7px;width:80px;text-align:center;top:206.84px;font-size:12px;line-height:12px;color:#262626;font-weight:400;white-space:pre;">H</span><span style="position:absolute;left:529.7px;width:80px;text-align:center;top:206.84px;font-size:12px;line-height:12px;color:#262626;font-weight:400;white-space:pre;">I</span><span style="position:absolute;left:593.7px;width:80px;text-align:center;top:206.84px;font-size:12px;line-height:12px;color:#262626;font-weight:400;white-space:pre;">J</span><span style="position:absolute;left:657.7px;width:80px;text-align:center;top:206.84px;font-size:12px;line-height:12px;color:#262626;font-weight:400;white-space:pre;">K</span><span style="position:absolute;left:721.7px;width:80px;text-align:center;top:206.84px;font-size:12px;line-height:12px;color:#262626;font-weight:400;white-space:pre;">L</span><span style="position:absolute;left:785.7px;width:80px;text-align:center;top:206.84px;font-size:12px;line-height:12px;color:#262626;font-weight:400;white-space:pre;">M</span><span style="position:absolute;left:849.7px;width:80px;text-align:center;top:206.84px;font-size:12px;line-height:12px;color:#262626;font-weight:400;white-space:pre;">N</span><span style="position:absolute;left:913.7px;width:80px;text-align:center;top:206.84px;font-size:12px;line-height:12px;color:#262626;font-weight:400;white-space:pre;">O</span><span style="position:absolute;left:977.7px;width:80px;text-align:center;top:206.84px;font-size:12px;line-height:12px;color:#262626;font-weight:400;white-space:pre;">P</span><span style="position:absolute;left:1041.7px;width:80px;text-align:center;top:206.84px;font-size:12px;line-height:12px;color:#262626;font-weight:400;white-space:pre;">Q</span><span style="position:absolute;left:1105.7px;width:80px;text-align:center;top:206.84px;font-size:12px;line-height:12px;color:#262626;font-weight:400;white-space:pre;clip-path:inset(0 38.7px 0 0);">R</span><span style="position:absolute;left:-27.5px;width:80px;text-align:center;top:227.84px;font-size:12px;line-height:12px;color:#217346;font-weight:400;white-space:pre;">1</span><span style="position:absolute;left:-27.5px;width:80px;text-align:center;top:247.84px;font-size:12px;line-height:12px;color:#262626;font-weight:400;white-space:pre;">2</span><span style="position:absolute;left:-27.5px;width:80px;text-align:center;top:267.84px;font-size:12px;line-height:12px;color:#262626;font-weight:400;white-space:pre;">3</span><span style="position:absolute;left:-27.5px;width:80px;text-align:center;top:287.84px;font-size:12px;line-height:12px;color:#262626;font-weight:400;white-space:pre;">4</span><span style="position:absolute;left:-27.5px;width:80px;text-align:center;top:307.84px;font-size:12px;line-height:12px;color:#262626;font-weight:400;white-space:pre;">5</span><span style="position:absolute;left:-27.5px;width:80px;text-align:center;top:327.84px;font-size:12px;line-height:12px;color:#262626;font-weight:400;white-space:pre;">6</span><span style="position:absolute;left:-27.5px;width:80px;text-align:center;top:347.84px;font-size:12px;line-height:12px;color:#262626;font-weight:400;white-space:pre;">7</span><span style="position:absolute;left:-27.5px;width:80px;text-align:center;top:367.84px;font-size:12px;line-height:12px;color:#262626;font-weight:400;white-space:pre;">8</span><span style="position:absolute;left:-27.5px;width:80px;text-align:center;top:387.84px;font-size:12px;line-height:12px;color:#262626;font-weight:400;white-space:pre;">9</span><span style="position:absolute;left:-27.5px;width:80px;text-align:center;top:407.84px;font-size:12px;line-height:12px;color:#262626;font-weight:400;white-space:pre;">10</span><span style="position:absolute;left:-27.5px;width:80px;text-align:center;top:427.84px;font-size:12px;line-height:12px;color:#262626;font-weight:400;white-space:pre;">11</span><span style="position:absolute;left:-27.5px;width:80px;text-align:center;top:447.84px;font-size:12px;line-height:12px;color:#262626;font-weight:400;white-space:pre;">12</span><span style="position:absolute;left:-27.5px;width:80px;text-align:center;top:467.84px;font-size:12px;line-height:12px;color:#262626;font-weight:400;white-space:pre;">13</span><span style="position:absolute;left:-27.5px;width:80px;text-align:center;top:487.84px;font-size:12px;line-height:12px;color:#262626;font-weight:400;white-space:pre;">14</span><span style="position:absolute;left:-27.5px;width:80px;text-align:center;top:507.84px;font-size:12px;line-height:12px;color:#262626;font-weight:400;white-space:pre;">15</span><span style="position:absolute;left:-27.5px;width:80px;text-align:center;top:527.84px;font-size:12px;line-height:12px;color:#262626;font-weight:400;white-space:pre;">16</span><span style="position:absolute;left:-27.5px;width:80px;text-align:center;top:547.84px;font-size:12px;line-height:12px;color:#262626;font-weight:400;white-space:pre;">17</span><span style="position:absolute;left:-27.5px;width:80px;text-align:center;top:567.84px;font-size:12px;line-height:12px;color:#262626;font-weight:400;white-space:pre;">18</span><span style="position:absolute;left:-27.5px;width:80px;text-align:center;top:587.84px;font-size:12px;line-height:12px;color:#262626;font-weight:400;white-space:pre;">19</span><span style="position:absolute;left:-27.5px;width:80px;text-align:center;top:607.84px;font-size:12px;line-height:12px;color:#262626;font-weight:400;white-space:pre;">20</span><span style="position:absolute;left:-27.5px;width:80px;text-align:center;top:627.84px;font-size:12px;line-height:12px;color:#262626;font-weight:400;white-space:pre;">21</span><span style="position:absolute;left:-27.5px;width:80px;text-align:center;top:647.84px;font-size:12px;line-height:12px;color:#262626;font-weight:400;white-space:pre;clip-path:inset(0 0 8.8px 0);">22</span></div></body></html>
